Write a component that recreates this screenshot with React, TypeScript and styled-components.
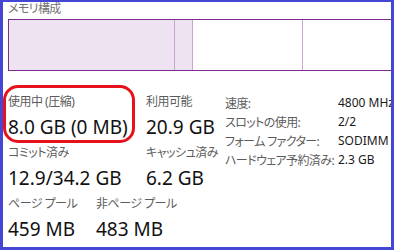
import React from "react";
import styled, { createGlobalStyle } from "styled-components";

const Global = createGlobalStyle`
  html, body { margin: 0; padding: 0; background: #ffffff; }
  * { box-sizing: border-box; }
`;

const JP = `"Noto Sans", "Noto Sans CJK JP", sans-serif`;

const Frame = styled.div`
  position: relative;
  width: 394px;
  height: 250px;
  overflow: hidden;
  background: #ffffff;
  border-style: solid;
  border-color: #4646d4;
  border-width: 2px 3px 3px 3px;
  padding-left: 5px;
  font-family: ${JP};
  font-feature-settings: "palt" 1;
`;

const Title = styled.div`
  font-size: 12px;
  line-height: 14px;
  letter-spacing: -0.6px;
  color: #737373;
`;

const Bar = styled.div`
  display: flex;
  margin-top: 3px;
  width: calc(100% + 20px);
  height: 52px;
  border: 1px solid #7b2c8c;
  border-right: none;
`;

const Segment = styled.div<{ $w?: number; $fill?: boolean; $last?: boolean }>`
  flex: ${(p) => (p.$w ? `0 0 ${p.$w}px` : "1 1 auto")};
  background: ${(p) => (p.$fill ? "#eee4f1" : "#ffffff")};
  border-right: ${(p) => (p.$last ? "none" : "1px solid #c8a6d0")};
`;

const Stats = styled.div`
  display: flex;
  padding-top: 21px;
`;

const LeftPane = styled.div`
  flex: 0 0 217px;
  display: flex;
  flex-direction: column;
  gap: 1px;
`;

const StatRow = styled.div<{ $first: number }>`
  display: grid;
  grid-template-columns: ${(p) => p.$first}px auto;
`;

const Stat = styled.div`
  display: flex;
  flex-direction: column;
`;

const Label = styled.div`
  font-size: 12px;
  line-height: 20px;
  letter-spacing: -0.5px;
  color: #5c5c5c;
  white-space: nowrap;
`;

const Value = styled.div`
  font-size: 19px;
  line-height: 30px;
  color: #111111;
  white-space: nowrap;
`;

const Details = styled.div`
  display: grid;
  grid-template-columns: 113px auto;
  grid-auto-rows: 19px;
  align-items: center;
  padding-top: 1px;
  font-size: 12px;
`;

const DKey = styled.div`
  color: #5c5c5c;
  letter-spacing: -0.6px;
  white-space: nowrap;
`;

const DVal = styled.div`
  color: #1a1a1a;
  white-space: nowrap;
`;

const Highlight = styled.div`
  position: absolute;
  left: 0;
  top: 83px;
  width: 132px;
  height: 58px;
  border: 3px solid #e5121d;
  border-radius: 15px;
  pointer-events: none;
`;

const details: [string, string][] = [
  ["速度:", "4800 MHz"],
  ["スロットの使用:", "2/2"],
  ["フォーム ファクター:", "SODIMM"],
  ["ハードウェア予約済み:", "2.3 GB"],
];

export default function App() {
  return (
    <>
      <Global />
      <Frame>
        <Title>メモリ構成</Title>
        <Bar>
          <Segment $w={166} $fill />
          <Segment $w={18} $fill />
          <Segment $w={110} />
          <Segment $last />
        </Bar>
        <Stats>
          <LeftPane>
            <StatRow $first={138}>
              <Stat>
                <Label>使用中 (圧縮)</Label>
                <Value>8.0 GB (0 MB)</Value>
              </Stat>
              <Stat>
                <Label>利用可能</Label>
                <Value>20.9 GB</Value>
              </Stat>
            </StatRow>
            <StatRow $first={138}>
              <Stat>
                <Label>コミット済み</Label>
                <Value>12.9/34.2 GB</Value>
              </Stat>
              <Stat>
                <Label>キャッシュ済み</Label>
                <Value>6.2 GB</Value>
              </Stat>
            </StatRow>
            <StatRow $first={88}>
              <Stat>
                <Label>ページ プール</Label>
                <Value>459 MB</Value>
              </Stat>
              <Stat>
                <Label>非ページ プール</Label>
                <Value>483 MB</Value>
              </Stat>
            </StatRow>
          </LeftPane>
          <Details>
            {details.map(([k, v]) => (
              <React.Fragment key={k}>
                <DKey>{k}</DKey>
                <DVal>{v}</DVal>
              </React.Fragment>
            ))}
          </Details>
        </Stats>
        <Highlight />
      </Frame>
    </>
  );
}
